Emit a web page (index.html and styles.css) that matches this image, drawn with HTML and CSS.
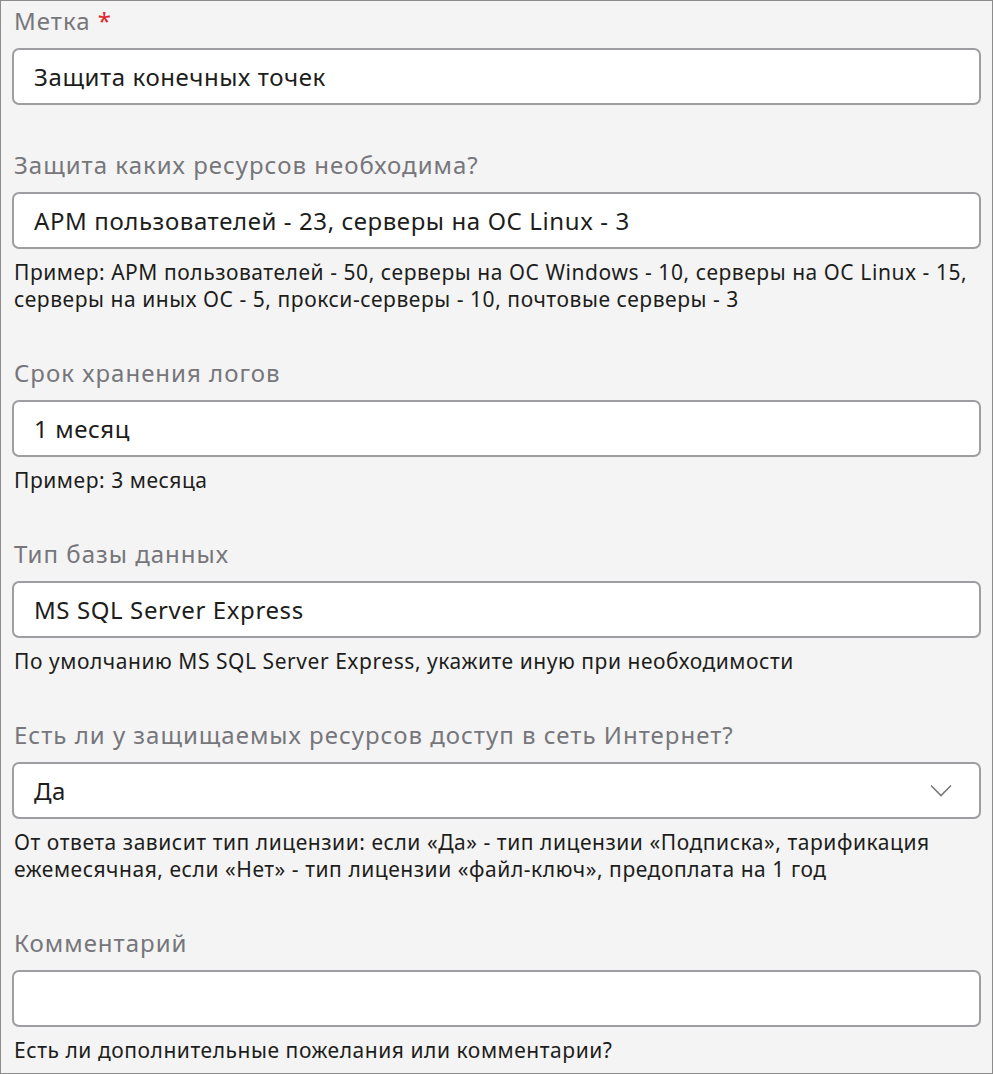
FILE: index.html
```html
<!DOCTYPE html>
<html lang="ru">
<head>
    <meta charset="UTF-8">
    <meta name="viewport" content="width=device-width, initial-scale=1.0">
    <title>Защита конечных точек</title>
    <link rel="stylesheet" href="styles.css">
</head>
<body>
    <form class="form">
        <div class="field">
            <label class="label" for="tag">Метка <span class="required">*</span></label>
            <input class="input" id="tag" type="text" value="Защита конечных точек">
        </div>

        <div class="field">
            <label class="label" for="resources">Защита каких ресурсов необходима?</label>
            <input class="input" id="resources" type="text" value="АРМ пользователей - 23, серверы на ОС Linux - 3">
            <p class="hint">Пример: АРМ пользователей - 50, серверы на ОС Windows - 10, серверы на ОС Linux - 15, серверы на иных ОС - 5, прокси-серверы - 10, почтовые серверы - 3</p>
        </div>

        <div class="field">
            <label class="label" for="logs">Срок хранения логов</label>
            <input class="input" id="logs" type="text" value="1 месяц">
            <p class="hint">Пример: 3 месяца</p>
        </div>

        <div class="field">
            <label class="label" for="db">Тип базы данных</label>
            <input class="input" id="db" type="text" value="MS SQL Server Express">
            <p class="hint">По умолчанию MS SQL Server Express, укажите иную при необходимости</p>
        </div>

        <div class="field">
            <label class="label" for="internet">Есть ли у защищаемых ресурсов доступ в сеть Интернет?</label>
            <div class="select">
                <span class="select-value" id="internet">Да</span>
                <svg class="chevron" width="22" height="14" viewBox="0 0 22 14">
                    <path d="M1 1.5 L11 11.5 L21 1.5" fill="none" stroke="#7a7a7e" stroke-width="1.6"/>
                </svg>
            </div>
            <p class="hint">От ответа зависит тип лицензии: если «Да» - тип лицензии «Подписка», тарификация ежемесячная, если «Нет» - тип лицензии «файл-ключ», предоплата на 1 год</p>
        </div>

        <div class="field">
            <label class="label" for="comment">Комментарий</label>
            <input class="input" id="comment" type="text" value="">
            <p class="hint">Есть ли дополнительные пожелания или комментарии?</p>
        </div>
    </form>
</body>
</html>
```

FILE: styles.css
```css
html, body {
    margin: 0;
    padding: 0;
}

body {
    font-family: "Noto Sans", "Open Sans", sans-serif;
    background: #f4f4f4;
    color: #1d1d1b;
}

.form {
    box-sizing: border-box;
    height: 1074px;
    border: 1px solid #8c8c8c;
    padding: 4px 11px 0 11px;
    display: flex;
    flex-direction: column;
    gap: 44px;
}

.field {
    display: flex;
    flex-direction: column;
}

.label {
    font-size: 24px;
    line-height: 32px;
    letter-spacing: 1px;
    color: #76767b;
    padding-left: 2px;
}

.required {
    color: #e0262c;
}

.input,
.select {
    box-sizing: border-box;
    height: 57px;
    margin-top: 11px;
    border: 2px solid #9d9da2;
    border-radius: 7px;
    background: #fff;
    padding: 0 20px;
    font-family: inherit;
    font-size: 24px;
    letter-spacing: 0.6px;
    color: #1d1d1b;
    outline: none;
}

.select {
    display: flex;
    align-items: center;
    justify-content: space-between;
}

.chevron {
    margin-right: 7px;
}

.hint {
    margin: 10px 0 0 2px;
    font-size: 21px;
    line-height: 27px;
    letter-spacing: 0.55px;
    color: #1d1d1b;
}
```
